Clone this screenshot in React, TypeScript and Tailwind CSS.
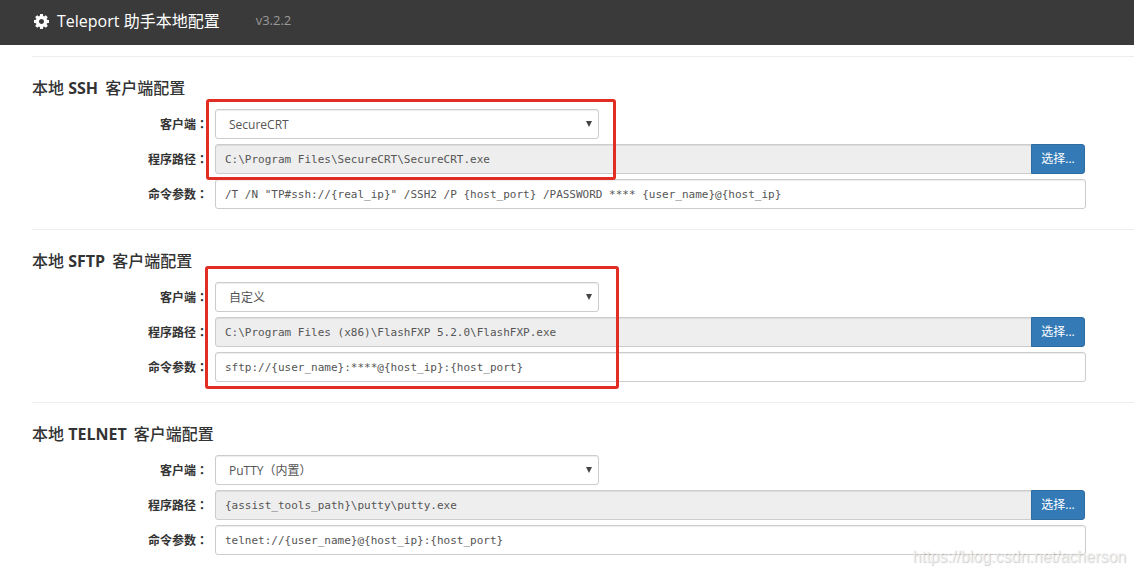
import type { ReactNode } from "react";

type Client = {
  id: string;
  name: string;
  app: string;
  path: string;
  args: string;
  mark?: ReactNode;
};

const clients: Client[] = [
  {
    id: "ssh",
    name: "SSH",
    app: "SecureCRT",
    path: "C:\\Program Files\\SecureCRT\\SecureCRT.exe",
    args: '/T /N "TP#ssh://{real_ip}" /SSH2 /P {host_port} /PASSWORD **** {user_name}@{host_ip}',
    mark: (
      <div className="pointer-events-none absolute -top-[10px] left-[174px] h-[81px] w-[410px] rounded-[3px] border-3 border-[#e12d22]" />
    ),
  },
  {
    id: "sftp",
    name: "SFTP",
    app: "自定义",
    path: "C:\\Program Files (x86)\\FlashFXP 5.2.0\\FlashFXP.exe",
    args: "sftp://{user_name}:****@{host_ip}:{host_port}",
    mark: (
      <div className="pointer-events-none absolute -top-[16px] left-[173px] h-[123px] w-[414px] rounded-[3px] border-3 border-[#e12d22]" />
    ),
  },
  {
    id: "telnet",
    name: "TELNET",
    app: "PuTTY（内置）",
    path: "{assist_tools_path}\\putty\\putty.exe",
    args: "telnet://{user_name}@{host_ip}:{host_port}",
  },
];

const field =
  "h-[30px] border border-[#ccc] text-[#555] shadow-[inset_0_1px_1px_rgba(0,0,0,0.075)] outline-none";
const mono =
  "px-[9px] text-[11px] font-['DejaVu_Sans_Mono','Noto_Sans_CJK_SC',monospace]";

function GearIcon() {
  return (
    <svg viewBox="0 128 1536 1536" className="size-[15px] fill-current" aria-hidden="true">
      <path d="M1024 896q0-106-75-181t-181-75-181 75-75 181 75 181 181 75 181-75 75-181zm512-109v222q0 12-8 23t-20 13l-185 28q-19 54-39 91 35 50 107 138 10 12 10 25t-9 23q-27 37-99 108t-94 71q-12 0-26-9l-138-108q-44 23-91 38-16 136-29 186-7 28-36 28h-222q-14 0-24.5-8.5t-11.5-21.5l-28-184q-49-16-90-37l-141 107q-10 9-25 9-14 0-25-11-126-114-165-168-7-10-7-23 0-12 8-23 15-21 51-66.5t54-70.5q-27-50-41-99l-183-27q-13-2-21-12.5t-8-23.5v-222q0-12 8-23t19-13l186-28q14-46 39-92-40-57-107-138-10-12-10-24 0-10 9-23 26-36 98.5-107.5t94.5-71.5q13 0 26 10l138 107q44-23 91-38 16-136 29-186 7-28 36-28h222q14 0 24.5 8.5t11.5 21.5l28 184q49 16 90 37l142-107q9-9 24-9 13 0 25 10 129 119 165 170 7 8 7 22 0 12-8 23-15 21-51 66.5t-54 70.5q26 50 41 98l183 28q13 2 21 12.5t8 23.5z" />
    </svg>
  );
}

function Row({ id, label, children }: { id: string; label: string; children: ReactNode }) {
  return (
    <div className="flex items-center">
      <label htmlFor={id} className="w-[183px] shrink-0 pr-[7px] text-right text-xs font-bold">
        {label}
        {/* the TC face centres the colon */}
        <span className="font-['Noto_Sans_CJK_TC',sans-serif]">：</span>
      </label>
      {children}
    </div>
  );
}

function ClientSection({ client }: { client: Client }) {
  const { id, name, app, path, args, mark } = client;

  return (
    <section className="border-t border-[#eee] pt-[19px] pb-5">
      <h2 className="mb-[9px] text-base leading-6 font-medium">
        本地 <span className="mr-[3px] font-bold">{name}</span> 客户端配置
      </h2>

      <div className="relative flex flex-col gap-[5px] pr-12">
        <Row id={`${id}-app`} label="客户端">
          <div className="relative w-96">
            <select
              id={`${id}-app`}
              className={`${field} w-full appearance-none rounded-[3px] bg-white px-[13px] pt-[2px] text-xs`}
            >
              <option>{app}</option>
            </select>
            <svg
              viewBox="0 0 7 7"
              className="pointer-events-none absolute top-[12px] right-[7px] size-[6px] fill-[#444]"
              aria-hidden="true"
            >
              <path d="M0 0h7L3.5 7z" />
            </svg>
          </div>
        </Row>

        <Row id={`${id}-path`} label="程序路径">
          <div className="mr-px flex min-w-0 flex-1">
            <input
              id={`${id}-path`}
              readOnly
              defaultValue={path}
              className={`${field} ${mono} min-w-0 flex-1 rounded-l-[3px] bg-[#eee]`}
            />
            <button
              type="button"
              className="-ml-px h-[30px] w-[54px] rounded-r-[3px] border border-[#2e6da4] bg-[#337ab7] text-xs text-white"
            >
              选择...
            </button>
          </div>
        </Row>

        <Row id={`${id}-args`} label="命令参数">
          <input
            id={`${id}-args`}
            defaultValue={args}
            className={`${field} ${mono} min-w-0 flex-1 rounded-[3px] bg-white`}
          />
        </Row>

        {mark}
      </div>
    </section>
  );
}

export default function App() {
  return (
    <div className="relative bg-white font-['Open_Sans','Noto_Sans_CJK_SC',sans-serif] text-[#333]">
      <header className="flex h-[45px] items-center bg-[#3a3a3a] pb-[3px] pl-[34px] text-white">
        <GearIcon />
        <h1 className="ml-2 text-base">Teleport 助手本地配置</h1>
        <span className="ml-9 text-[13px] text-[#999]">v3.2.2</span>
      </header>

      <main className="pt-[11px] pl-8">
        {clients.map((c) => (
          <ClientSection key={c.id} client={c} />
        ))}
      </main>

      <div className="pointer-events-none absolute right-2 bottom-2 font-['Liberation_Sans',sans-serif] text-base leading-5 text-[#f2f2f2]/80 text-shadow-[1px_1px_1px_rgba(0,0,0,0.2)]">
        https://blog.csdn.net/acherson
      </div>
    </div>
  );
}
